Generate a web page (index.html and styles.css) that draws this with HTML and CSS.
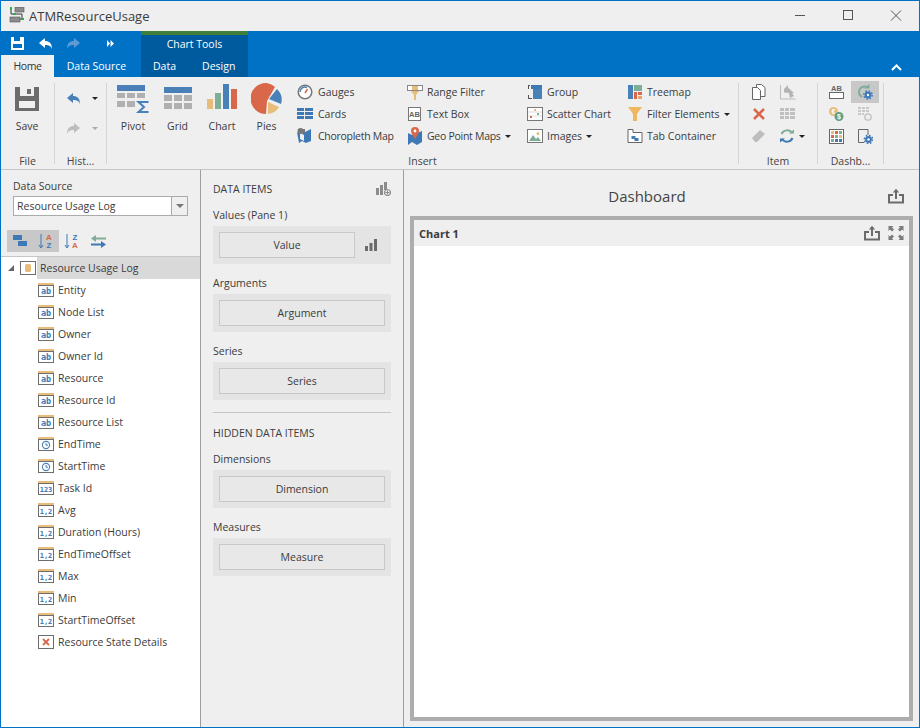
FILE: index.html
```html
<!DOCTYPE html>
<html lang="en">
<head>
    <meta charset="UTF-8">
    <title>ATMResourceUsage</title>
    <link rel="stylesheet" href="styles.css">
</head>
<body>
<svg class="defs" width="0" height="0">
    <defs>
        <g id="f-ab"><rect x="0" y="0" width="16" height="2.5" fill="#e8bd7c"/><rect x=".5" y="2.5" width="15" height="11" fill="#fff" stroke="#6d6d6d"/><text x="8" y="11" class="fi">ab</text></g>
        <g id="f-time"><rect x="0" y="0" width="16" height="2.5" fill="#e8bd7c"/><rect x=".5" y="2.5" width="15" height="11" fill="#fff" stroke="#6d6d6d"/><circle cx="8" cy="8" r="3.6" fill="none" stroke="#4a80b8" stroke-width="1.1"/><path d="M8 6v2.2h2" fill="none" stroke="#4a80b8"/></g>
        <g id="f-123"><rect x="0" y="0" width="16" height="2.5" fill="#e8bd7c"/><rect x=".5" y="2.5" width="15" height="11" fill="#fff" stroke="#6d6d6d"/><text x="8" y="10.8" class="fi fs">123</text></g>
        <g id="f-12"><rect x="0" y="0" width="16" height="2.5" fill="#e8bd7c"/><rect x=".5" y="2.5" width="15" height="11" fill="#fff" stroke="#6d6d6d"/><text x="8" y="10.8" class="fi fs">1,2</text></g>
        <g id="share"><path d="M5 7H1v7.5h14V7h-4" fill="none" stroke="#6b6b6b" stroke-width="2"/><path d="M8 11V2" stroke="#6b6b6b" stroke-width="2"/><path d="M4.8 4.4 8 .8l3.2 3.6z" fill="#6b6b6b"/></g>
        <g id="gear"><circle cx="0" cy="0" r="3.4" fill="#3e78b5"/><circle cx="0" cy="0" r="4.2" fill="none" stroke="#3e78b5" stroke-width="1.4" stroke-dasharray="1.6 1.7"/><circle cx="0" cy="0" r="1.2" fill="#fff"/></g>
    </defs>
</svg>
<div class="window">
    <div class="titlebar">
        <svg class="app-icon" width="16" height="16" viewBox="0 0 16 16"><rect x="6" y="0" width="9" height="5" fill="#8c8c8c" stroke="#555" stroke-width=".6"/><rect x="1" y="10" width="10" height="5" fill="#8c8c8c" stroke="#555" stroke-width=".6"/><path d="M2 2v5h11v5h-2" fill="none" stroke="#333"/><rect x="1" y="0" width="2" height="3" fill="#22b14c"/><rect x="4" y="6" width="3" height="2" fill="#22b14c"/><rect x="12" y="11" width="3" height="2" fill="#22b14c"/></svg>
        <span class="app-title">ATMResourceUsage</span>
        <div class="win-btns">
            <svg width="12" height="12" viewBox="0 0 12 12"><path d="M1 5.5h10" stroke="#555"/></svg>
            <svg width="12" height="12" viewBox="0 0 12 12"><rect x="1.5" y=".5" width="9" height="9" fill="none" stroke="#555"/></svg>
            <svg width="12" height="12" viewBox="0 0 12 12"><path d="M1 .5l10 10M11 .5l-10 10" stroke="#555"/></svg>
        </div>
    </div>

    <div class="blueband">
        <div class="qat">
            <svg class="q1" width="13" height="13" viewBox="0 0 13 13"><path d="M0 0h13v13H0z" fill="#fff"/><rect x="3" y="0" width="6" height="4" fill="#0072c6"/><rect x="2" y="7" width="9" height="4" fill="#0072c6"/></svg>
            <svg class="q2" width="13" height="11" viewBox="0 0 13 11"><path d="M6 0v3c4 0 7 2 7 8-1-3-3-4-7-4v3L0 5z" fill="#fff"/></svg>
            <svg class="q3" width="13" height="11" viewBox="0 0 13 11"><path d="M7 0v3C3 3 0 5 0 11c1-3 3-4 7-4v3l6-5z" fill="#5e9bd6"/></svg>
            <svg class="q4" width="7" height="7" viewBox="0 0 7 7"><path d="M0 0l3 3.5L0 7zM3.500 0l3.500 3.500L3.500 7z" fill="#fff"/></svg>
        </div>
        <div class="tabs">
            <span class="tab home">Home</span>
            <span class="tab ds">Data Source</span>
            <div class="ctx">
                <div class="ctx-title">Chart Tools</div>
                <div class="ctx-tabs"><span class="tab">Data</span><span class="tab">Design</span></div>
            </div>
            <svg class="collapse" width="11" height="7" viewBox="0 0 11 7"><path d="M1 6l4.500-4.500L10 6" fill="none" stroke="#fff" stroke-width="2"/></svg>
        </div>
    </div>

    <div class="ribbon">
        <div class="rgroup g-file">
            <div class="rbody big-row">
                <div class="big">
                    <svg width="24" height="24" viewBox="0 0 24 24"><path d="M0 0h24v24H0z" fill="#6b6b6b"/><rect x="5" y="0" width="14" height="9" fill="#efefef"/><rect x="12" y="2" width="4" height="5" fill="#6b6b6b"/><rect x="4" y="14" width="16" height="7" fill="#efefef"/></svg>
                    <span>Save</span>
                </div>
            </div>
            <div class="rlabel">File</div>
        </div>
        <div class="rgroup g-hist">
            <div class="rbody hist">
                <div class="hrow"><svg width="13" height="11" viewBox="0 0 13 11"><path d="M6 0v3c4 0 7 2 7 8-1-3-3-4-7-4v3L0 5z" fill="#4a80b8"/></svg><i class="caret"></i></div>
                <div class="hrow"><svg width="13" height="11" viewBox="0 0 13 11"><path d="M7 0v3C3 3 0 5 0 11c1-3 3-4 7-4v3l6-5z" fill="#bdbdbd"/></svg><i class="caret off"></i></div>
            </div>
            <div class="rlabel">Hist...</div>
        </div>
        <div class="rgroup g-insert">
            <div class="rbody big-row">
                <div class="big b-pivot">
                    <svg width="32" height="28" viewBox="0 0 32 28"><rect x="0" y="0" width="28" height="6" fill="#4a80b8"/><path d="M0 8h8v5H0zM10 8h8v5h-8zM20 8h8v5h-8zM0 16h8v6H0zM10 16h8v6h-8z" fill="#b0b0b0"/><path d="M31.500 17H21.500l5.500 5-5.500 5h10" fill="none" stroke="#4a80b8" stroke-width="2"/></svg>
                    <span>Pivot</span>
                </div>
                <div class="big b-grid">
                    <svg width="28" height="28" viewBox="0 0 28 28"><rect x="0" y="2" width="28" height="6" fill="#4a80b8"/><path d="M0 10h8v6H0zM10 10h8v6h-8zM20 10h8v6h-8zM0 18h8v6H0zM10 18h8v6h-8zM20 18h8v6h-8z" fill="#b0b0b0"/></svg>
                    <span>Grid</span>
                </div>
                <div class="big b-chart">
                    <svg width="30" height="28" viewBox="0 2 30 28"><rect x="0" y="16" width="6" height="10" fill="#e8bd7c"/><rect x="8" y="10" width="6" height="16" fill="#7fae97"/><rect x="16" y="1" width="6" height="25" fill="#4a80b8"/><rect x="24" y="6" width="6" height="20" fill="#d9674a"/></svg>
                    <span>Chart</span>
                </div>
                <div class="big b-pies">
                    <svg width="32" height="32" viewBox="0 0 32 32"><path d="M15 0A15 15 0 1 0 15 31L16 18 24 4A15 15 0 0 0 15 0z" fill="#d9674a"/><path d="M26 6A15 15 0 0 1 30 21L18 16z" fill="#4a80b8"/><path d="M17 19L28 24A14 14 0 0 1 17 31z" fill="#e8bd7c"/></svg>
                    <span>Pies</span>
                </div>
                <div class="small-col c1">
                    <div class="sm"><svg width="16" height="16" viewBox="0 0 16 16"><circle cx="8" cy="8" r="6.800" fill="#fff" stroke="#777" stroke-width="1.500"/><path d="M3 8a5 5 0 0 1 7-4.500" fill="none" stroke="#4a80b8" stroke-width="1.500"/><path d="M8 9l2.500-4" stroke="#d9674a" stroke-width="1.500"/></svg>Gauges</div>
                    <div class="sm"><svg width="16" height="16" viewBox="0 0 16 16"><path d="M0 2h7v3H0zM8 2h8v3H8zM0 6h7v3H0zM8 6h8v3H8zM0 10h7v3H0zM8 10h8v3H8z" fill="#3e78b5"/></svg>Cards</div>
                    <div class="sm tight"><svg width="16" height="16" viewBox="0 0 16 16"><path d="M0 4l4 2 4-2 6-3v12l-5 2-4-2-3 2z" fill="#3e78b5"/><path d="M3 5l4 2v6l-4-2z" fill="#efefef"/><circle cx="3.500" cy="3" r="3" fill="#777"/><path d="M3 1h5v4H3z" fill="#777"/></svg>Choropleth Map</div>
                </div>
                <div class="small-col c2">
                    <div class="sm"><svg width="16" height="16" viewBox="0 0 16 16"><rect x=".5" y="1.500" width="15" height="5" fill="#fff" stroke="#888"/><rect x="5" y="2" width="6" height="4" fill="#e8bd7c"/><path d="M4 7h8l-3 4v5H7v-5z" fill="#e8bd7c"/></svg>Range Filter</div>
                    <div class="sm"><svg width="14" height="16" viewBox="0 0 14 16"><rect x=".5" y="1.500" width="12" height="13" fill="#fff" stroke="#777"/><text x="6.500" y="10.500" class="ab">AB</text></svg>Text Box</div>
                    <div class="sm tight"><svg width="14" height="18" viewBox="0 0 14 18"><path d="M0 6l4 2 5-2 5-2v11l-5 3-5-3-4 3z" fill="#3e78b5"/><path d="M7 0a4 4 0 0 1 4 4c0 2-2 5-4 8-2-3-4-6-4-8a4 4 0 0 1 4-4z" fill="#d9674a"/><circle cx="7" cy="4" r="1.400" fill="#fff"/></svg>Geo Point Maps<i class="caret"></i></div>
                </div>
                <div class="small-col c3">
                    <div class="sm"><svg width="14" height="14" viewBox="0 0 14 14"><path d="M3 0h11v4H3z" fill="#3e78b5"/><path d="M5 4h9v10H5z" fill="#4a80b8"/><path d="M0 4V0h2v1H1v3zM0 10h1v3h3v1H0z" fill="#555"/></svg>Group</div>
                    <div class="sm"><svg width="16" height="14" viewBox="0 0 16 14"><rect x=".5" y=".5" width="15" height="13" fill="#fff" stroke="#777"/><path d="M1 5h14M1 9h14" stroke="#ddd"/><rect x="7" y="2" width="2" height="2" fill="#e8bd7c"/><rect x="3" y="9" width="2" height="2" fill="#d9674a"/><rect x="10" y="6" width="2" height="2" fill="#7fae97"/></svg>Scatter Chart</div>
                    <div class="sm"><svg width="16" height="14" viewBox="0 0 16 14"><rect x=".5" y=".5" width="15" height="13" fill="#fff" stroke="#777"/><path d="M2 12l4-6 3 4 2-2 3 4z" fill="#7fae97"/><circle cx="11" cy="4.500" r="1.500" fill="#e8bd7c"/></svg>Images<i class="caret"></i></div>
                </div>
                <div class="small-col c4">
                    <div class="sm"><svg width="14" height="14" viewBox="0 0 14 14"><path d="M0 0h5v14H0z" fill="#4a80b8"/><path d="M6 0h8v6H6z" fill="#7fae97"/><path d="M6 7h3v7H6z" fill="#d9674a"/><path d="M10 7h4v3h-4z" fill="#d9674a"/><path d="M10 11h4v3h-4z" fill="#e8a66c"/></svg>Treemap</div>
                    <div class="sm"><svg width="14" height="14" viewBox="0 0 14 14"><path d="M0 0h14L9 7v7H5V7z" fill="#eeb862"/></svg>Filter Elements<i class="caret"></i></div>
                    <div class="sm"><svg width="15" height="14" viewBox="0 0 15 14"><path d="M.5 13.500V.5h5v3h9v10z" fill="#fff" stroke="#666"/><path d="M4 7h4v3H4z" fill="#4a80b8"/><path d="M7 9h4v3H7z" fill="#3e78b5"/></svg>Tab Container</div>
                </div>
            </div>
            <div class="rlabel">Insert</div>
        </div>
        <div class="rgroup g-item">
            <div class="rbody icon-grid">
                <svg width="14" height="16" viewBox="0 0 14 16"><path d="M4.500 3V.5h5l3.500 3v9H9" fill="#fff" stroke="#666"/><path d="M.5 3.500h5l3 3v9h-8z" fill="#fff" stroke="#666"/></svg>
                <svg width="16" height="16" viewBox="0 0 16 16"><path d="M.5 1v14h15" fill="none" stroke="#bbb"/><path d="M4 5l4-4v2.500l6 5.500-2 0 2 3-4 2-1-5-5-.5z" fill="#b4b4b4"/></svg>
                <svg width="12" height="12" viewBox="0 0 12 12"><path d="M1 1l10 10M11 1L1 11" stroke="#d9674a" stroke-width="2.500"/></svg>
                <svg width="15" height="12" viewBox="0 0 15 12"><path d="M0 0h4v3H0zM5 0h4v3H5zM10 0h5v3h-5zM0 4h4v3H0zM5 4h4v3H5zM10 4h5v3h-5zM0 8h4v3H0zM5 8h4v3H5zM10 8h5v3h-5z" fill="#c0c0c0"/></svg>
                <svg width="14" height="12" viewBox="0 0 14 12"><path d="M0 8l8-8 5 4-8 8H3z" fill="#bdbdbd"/></svg>
                <span class="with-caret"><svg width="16" height="16" viewBox="0 0 16 16"><path d="M13 5A6 6 0 0 0 2.500 6" fill="none" stroke="#7fae97" stroke-width="2"/><path d="M10 5.500h5v-4z" fill="#7fae97"/><path d="M3 11a6 6 0 0 0 10.500-1" fill="none" stroke="#3e78b5" stroke-width="2"/><path d="M6 10.500H1v4z" fill="#3e78b5"/></svg><i class="caret"></i></span>
            </div>
            <div class="rlabel">Item</div>
        </div>
        <div class="rgroup g-dash">
            <div class="rbody icon-grid dash-grid">
                <span class="cell"><svg width="15" height="14" viewBox="0 0 15 14"><text x="7.500" y="6" class="ab">AB</text><rect x=".5" y="7.500" width="14" height="6" fill="#fff" stroke="#666"/></svg></span>
                <span class="cell active"><svg width="16" height="16" viewBox="0 0 16 16"><path d="M10.500 3.500A5.500 5.500 0 1 0 5 13" fill="none" stroke="#7fae97" stroke-width="2"/><path d="M7 4.500h5.500V0z" fill="#7fae97"/><use href="#gear" x="11" y="11"/></svg></span>
                <span class="cell"><svg width="15" height="14" viewBox="0 0 15 14"><circle cx="4.500" cy="4.500" r="4.500" fill="#e8bd7c"/><text x="4.500" y="7" class="dl">€</text><circle cx="10" cy="9.500" r="4.500" fill="#5f9e85"/><text x="10" y="12" class="dl">$</text></svg></span>
                <span class="cell"><svg width="14" height="14" viewBox="0 0 14 14"><path d="M0 0h3v2H0zM4 0h3v2H4zM8 0h3v2H8zM0 3h3v2H0zM4 3h3v2H4zM8 3h3v2H8zM0 6h3v2H0zM4 6h2v2H4z" fill="#c8c8c8"/><circle cx="10" cy="10" r="3.200" fill="none" stroke="#c0c0c0" stroke-width="1.300"/></svg></span>
                <span class="cell"><svg width="15" height="15" viewBox="0 0 15 15"><rect x=".5" y=".5" width="14" height="14" fill="#fff" stroke="#666"/><path d="M2 2h3v3H2z" fill="#e8bd7c"/><path d="M6 2h3v3H6z" fill="#d9674a"/><path d="M10 2h3v3h-3z" fill="#7fae97"/><path d="M2 6h3v3H2z" fill="#d9674a"/><path d="M6 6h3v3H6z" fill="#7fae97"/><path d="M10 6h3v3h-3z" fill="#e8bd7c"/><path d="M2 10h3v3H2z" fill="#7fae97"/><path d="M6 10h3v3H6zM10 10h3v3h-3z" fill="#3e78b5"/></svg></span>
                <span class="cell"><svg width="15" height="15" viewBox="0 0 15 15"><path d="M6 13.500H.5V.5h9.500V6" fill="none" stroke="#666"/><use href="#gear" x="10.500" y="10.500"/></svg></span>
            </div>
            <div class="rlabel">Dashb...</div>
        </div>
    </div>

    <div class="main">
        <div class="left">
            <div class="ds-label">Data Source</div>
            <div class="combo"><span class="combo-text">Resource Usage Log</span><span class="combo-btn"><i class="caret grey"></i></span></div>
            <div class="tools">
                <span class="tool on"><svg width="16" height="12" viewBox="0 0 16 12"><path d="M1 0h9v5H1zM6 6h9v5H6z" fill="#3e78b5"/></svg></span>
                <span class="tool on"><svg width="16" height="16" viewBox="0 0 16 16"><path d="M3 1v13M1 12l2 3 2-3" fill="none" stroke="#3e78b5"/><text x="11" y="7" class="sort red">A</text><text x="11" y="15" class="sort blue">Z</text></svg></span>
                <span class="tool"><svg width="16" height="16" viewBox="0 0 16 16"><path d="M3 1v13M1 12l2 3 2-3" fill="none" stroke="#3e78b5"/><text x="11" y="7" class="sort blue">Z</text><text x="11" y="15" class="sort red">A</text></svg></span>
                <span class="tool"><svg width="15" height="13" viewBox="0 0 15 13"><path d="M15 3.500H4" stroke="#7fae97" stroke-width="2"/><path d="M5 0v7L0 3.500z" fill="#7fae97"/><path d="M0 9.500h11" stroke="#3e78b5" stroke-width="2"/><path d="M10 6v7l5-3.500z" fill="#3e78b5"/></svg></span>
            </div>
            <div class="tree">
                <div class="root">
                    <svg class="expander" width="6" height="6" viewBox="0 0 6 6"><path d="M6 0v6H0z" fill="#666"/></svg>
                    <svg class="db" width="16" height="14" viewBox="0 0 16 14"><rect x=".5" y=".5" width="15" height="13" fill="#fff" stroke="#6d6d6d"/><rect x="5" y="3" width="6" height="8" rx="1.500" fill="#e8bd7c"/></svg>
                    <span class="root-text">Resource Usage Log</span>
                </div>
                <div class="field"><svg width="16" height="14"><use href="#f-ab"/></svg>Entity</div>
                <div class="field"><svg width="16" height="14"><use href="#f-ab"/></svg>Node List</div>
                <div class="field"><svg width="16" height="14"><use href="#f-ab"/></svg>Owner</div>
                <div class="field"><svg width="16" height="14"><use href="#f-ab"/></svg>Owner Id</div>
                <div class="field"><svg width="16" height="14"><use href="#f-ab"/></svg>Resource</div>
                <div class="field"><svg width="16" height="14"><use href="#f-ab"/></svg>Resource Id</div>
                <div class="field"><svg width="16" height="14"><use href="#f-ab"/></svg>Resource List</div>
                <div class="field"><svg width="16" height="14"><use href="#f-time"/></svg>EndTime</div>
                <div class="field"><svg width="16" height="14"><use href="#f-time"/></svg>StartTime</div>
                <div class="field"><svg width="16" height="14"><use href="#f-123"/></svg>Task Id</div>
                <div class="field"><svg width="16" height="14"><use href="#f-12"/></svg>Avg</div>
                <div class="field"><svg width="16" height="14"><use href="#f-12"/></svg>Duration (Hours)</div>
                <div class="field"><svg width="16" height="14"><use href="#f-12"/></svg>EndTimeOffset</div>
                <div class="field"><svg width="16" height="14"><use href="#f-12"/></svg>Max</div>
                <div class="field"><svg width="16" height="14"><use href="#f-12"/></svg>Min</div>
                <div class="field"><svg width="16" height="14"><use href="#f-12"/></svg>StartTimeOffset</div>
                <div class="field"><svg width="16" height="14" viewBox="0 0 16 14"><rect x=".5" y=".5" width="15" height="13" fill="#fff" stroke="#6d6d6d"/><path d="M5 4l6 6M11 4l-6 6" stroke="#d9674a" stroke-width="1.800"/></svg>Resource State Details</div>
            </div>
        </div>

        <div class="mid">
            <div class="mid-head">
                <span>DATA ITEMS</span>
                <svg width="15" height="14" viewBox="0 0 15 14"><path d="M0 6h3v7H0zM4 3h3v10H4zM8 0h3v8H8z" fill="#8c8c8c"/><circle cx="11.500" cy="10.500" r="3" fill="#efefef" stroke="#8c8c8c" stroke-width="1.200"/><path d="M9.500 10.500h4M11.500 8.500v4" stroke="#8c8c8c"/></svg>
            </div>
            <div class="sect-label">Values (Pane 1)</div>
            <div class="well">
                <div class="slot">Value</div>
                <svg class="well-icon" width="12" height="12" viewBox="0 0 12 12"><path d="M0 7h3v5H0zM4.500 4h3v8h-3zM9 0h3v12H9z" fill="#6b6b6b"/></svg>
            </div>
            <div class="sect-label">Arguments</div>
            <div class="well"><div class="slot">Argument</div></div>
            <div class="sect-label">Series</div>
            <div class="well"><div class="slot">Series</div></div>
            <hr class="rule">
            <div class="hidden-head">HIDDEN DATA ITEMS</div>
            <div class="sect-label">Dimensions</div>
            <div class="well"><div class="slot">Dimension</div></div>
            <div class="sect-label">Measures</div>
            <div class="well"><div class="slot">Measure</div></div>
        </div>

        <div class="right">
            <div class="dash-head">
                <span class="dash-title">Dashboard</span>
                <svg class="dash-share" width="16" height="16" viewBox="0 0 16 16"><use href="#share"/></svg>
            </div>
            <div class="chart">
                <div class="chart-cap">
                    <b>Chart 1</b>
                    <svg width="16" height="16" viewBox="0 0 16 16"><use href="#share"/></svg>
                    <svg class="maxi" width="16" height="14" viewBox="0 0 15 14"><path d="M0 0h5L3.500 1.500 5.500 3.500 3.500 5.500 1.500 3.500 0 5zM15 0h-5l1.500 1.500-2 2 2 2 2-2L15 5zM0 14h5l-1.500-1.500 2-2-2-2-2 2L0 9zM15 14h-5l1.500-1.500-2-2 2-2 2 2L15 9z" fill="#7b7b7b"/></svg>
                </div>
                <div class="chart-body"></div>
            </div>
        </div>
    </div>
</div>
</body>
</html>
```

FILE: styles.css
```css
* {
    box-sizing: border-box;
}
html, body {
    margin: 0;
    height: 100%;
}
body {
    font-family: "Open Sans", "Noto Sans", sans-serif;
    font-size: 10.5px;
    color: #3b3b3b;
    overflow: hidden;
}
.defs {
    position: absolute;
}
svg {
    display: block;
    flex: none;
}
.fi {
    font-family: "DejaVu Sans Mono", monospace;
    font-size: 8.5px;
    font-weight: bold;
    fill: #3e78b5;
    text-anchor: middle;
}
.fs {
    font-size: 7px;
}
.ab {
    font-family: "Liberation Sans", sans-serif;
    font-size: 7.500px;
    font-weight: bold;
    fill: #666;
    text-anchor: middle;
}
.dl {
    font-family: "Liberation Sans", sans-serif;
    font-size: 7px;
    font-weight: bold;
    fill: #fff;
    text-anchor: middle;
}
.sort {
    font-family: "Liberation Sans", sans-serif;
    font-size: 8px;
    font-weight: bold;
    text-anchor: middle;
}
.red { fill: #d9674a; }
.blue { fill: #3e78b5; }

.window {
    width: 920px;
    height: 728px;
    border: 1px solid #0072c6;
    background: #efefef;
    display: flex;
    flex-direction: column;
}

/* title bar */
.titlebar {
    height: 30px;
    display: flex;
    align-items: center;
    padding-left: 8px;
}
.app-icon {
    margin-top: -2px;
}
.app-title {
    font-size: 13px;
    margin-left: 4px;
    color: #3b3b3b;
}
.win-btns {
    margin-left: auto;
    display: flex;
    gap: 36px;
    padding-right: 17px;
}

/* blue band with qat and tabs */
.blueband {
    height: 46px;
    background: #0072c6;
    display: flex;
    flex-direction: column;
}
.qat {
    height: 24px;
    display: flex;
    align-items: center;
    padding-left: 10px;
}
.q2 { margin-left: 15px; }
.q3 { margin-left: 15px; }
.q4 { margin-left: 27px; }
.tabs {
    flex: 1;
    display: flex;
    color: #fff;
    position: relative;
}
.tab {
    font-size: 10.500px;
    line-height: 22px;
}
.tab.home {
    width: 53px;
    background: #efefef;
    color: #333;
    text-align: center;
    letter-spacing: -.4px;
}
.tab.ds {
    width: 85px;
    text-align: center;
}
.ctx {
    position: absolute;
    left: 140px;
    bottom: 0;
    width: 107px;
    height: 46px;
    background: #005a9e;
    border-top: 4px solid #3f7f3a;
}
.ctx-title {
    height: 20px;
    line-height: 18px;
    text-align: center;
}
.ctx-tabs {
    display: flex;
    gap: 26px;
    padding-left: 12px;
}
.collapse {
    position: absolute;
    right: 17px;
    bottom: 6px;
}

/* ribbon */
.ribbon {
    height: 93px;
    display: flex;
    border-bottom: 1px solid #c6c6c6;
    padding: 6px 0 5px;
}
.rgroup {
    display: flex;
    flex-direction: column;
    border-right: 1px solid #d4d4d4;
}
.rbody {
    flex: 1;
}
.rlabel {
    text-align: center;
    height: 10px;
    line-height: 14px;
    color: #444;
}
.g-file { width: 54px; }
.g-hist { width: 52px; }
.g-insert { width: 632px; }
.g-item { width: 79px; }
.g-dash { width: 66px; }
.big-row {
    display: flex;
}
.big {
    display: flex;
    flex-direction: column;
    align-items: center;
}
.big svg {
    height: 32px;
    margin-bottom: 4px;
}
.g-file .big {
    width: 52px;
}
.b-pivot { width: 52px; }
.b-grid { width: 37px; }
.b-chart { width: 52px; }
.b-pies { width: 37px; }
.small-col {
    display: flex;
    flex-direction: column;
    gap: 2px;
    margin-top: -1px;
}
.sm {
    display: flex;
    align-items: center;
    height: 20px;
    gap: 4px;
    white-space: nowrap;
}
.sm svg {
    width: 16px;
}
.tight {
    letter-spacing: -.28px;
}
.c1 { width: 110px; margin-left: 12px; }
.c1 .sm { gap: 5px; }
.c2 { width: 120px; }
.c3 { width: 100px; }
.c4 { width: 105px; }
.caret {
    display: inline-block;
    border: 3px solid transparent;
    border-top: 3px solid #222;
    border-bottom: 0;
    flex: none;
}
.caret.off { border-top-color: #aaa; }
.caret.grey { border-width: 4px 4px 0; border-top-color: #777; }
.hist {
    display: flex;
    flex-direction: column;
    gap: 19px;
    padding: 10px 0 0 12px;
}
.hrow {
    display: flex;
    align-items: center;
    gap: 12px;
    height: 11px;
}
.icon-grid {
    display: grid;
    grid-template-columns: 29px 29px;
    grid-auto-rows: 22px;
    align-items: center;
    justify-items: center;
    padding-left: 5px;
    margin-top: -2px;
}
.with-caret {
    display: flex;
    align-items: center;
    gap: 4px;
    justify-self: start;
    margin-left: 6px;
}
.dash-grid {
    grid-template-columns: 29px 28px;
    padding-left: 4px;
}
.cell {
    width: 28px;
    height: 22px;
    display: flex;
    align-items: center;
    justify-content: center;
}
.cell.active {
    background: #c8c8c8;
}

/* main area */
.main {
    flex: 1;
    display: flex;
    min-height: 0;
}
.left {
    width: 200px;
    background: #fff;
    border-right: 1px solid #9e9e9e;
    display: flex;
    flex-direction: column;
}
.ds-label {
    background: #efefef;
    padding: 9px 0 2px 12px;
    height: 26px;
}
.combo {
    background: #efefef;
    padding: 0 12px;
    height: 20px;
    display: flex;
}
.combo-text {
    flex: 1;
    background: #fff;
    border: 1px solid #ababab;
    border-right: 0;
    padding-left: 3px;
    line-height: 18px;
}
.combo-btn {
    width: 17px;
    background: #efefef;
    border: 1px solid #ababab;
    display: flex;
    align-items: center;
    justify-content: center;
}
.tools {
    background: #efefef;
    height: 41px;
    padding: 14px 0 0 6px;
    display: flex;
    align-items: flex-start;
    border-bottom: 1px solid #c6c6c6;
}
.tool {
    width: 26px;
    height: 22px;
    display: flex;
    align-items: center;
    justify-content: center;
}
.tool.on {
    background: #c8c8c8;
}
.tree {
    flex: 1;
}
.root {
    display: flex;
    align-items: center;
    height: 22px;
    padding-left: 7px;
}
.expander {
    margin-right: 6px;
}
.db {
    margin-right: 1px;
}
.root-text {
    flex: 1;
    line-height: 22px;
    background: #d9d9d9;
    padding-left: 3px;
}
.field {
    display: flex;
    align-items: center;
    height: 22px;
    padding-left: 37px;
    gap: 4px;
}

.mid {
    width: 203px;
    border-right: 1px solid #9e9e9e;
    padding: 0 12px;
}
.mid-head {
    display: flex;
    align-items: center;
    justify-content: space-between;
    height: 38px;
}
.sect-label {
    height: 16px;
    line-height: 14px;
    margin-bottom: 2px;
}
.well {
    height: 38px;
    background: #e4e4e4;
    padding: 6px;
    display: flex;
    align-items: center;
    margin-bottom: 12px;
}
.slot {
    flex: 1;
    height: 26px;
    line-height: 24px;
    background: #e8e8e8;
    border: 1px solid #c8c8c8;
    text-align: center;
}
.well-icon {
    margin: 0 8px 0 10px;
}
.rule {
    border: 0;
    border-top: 1px solid #c6c6c6;
    margin: 0 0 12px;
}
.hidden-head {
    height: 27px;
    line-height: 16px;
}

.right {
    flex: 1;
    display: flex;
    flex-direction: column;
    padding: 0 6px 6px;
}
.dash-head {
    height: 46px;
    display: flex;
    align-items: center;
    position: relative;
    justify-content: center;
    padding: 5px 29px 0 0;
}
.dash-title {
    font-size: 15px;
    color: #444;
}
.dash-share {
    position: absolute;
    right: 9px;
    top: 18px;
}
.chart {
    flex: 1;
    border: 4px solid #adadad;
    display: flex;
    flex-direction: column;
}
.chart-cap {
    height: 26px;
    display: flex;
    align-items: center;
    padding: 0 5px;
}
.chart-cap b {
    margin-right: auto;
    font-weight: 700;
    font-size: 11px;
}
.maxi {
    margin-left: 8px;
}
.chart-body {
    flex: 1;
    background: #fff;
}
```
